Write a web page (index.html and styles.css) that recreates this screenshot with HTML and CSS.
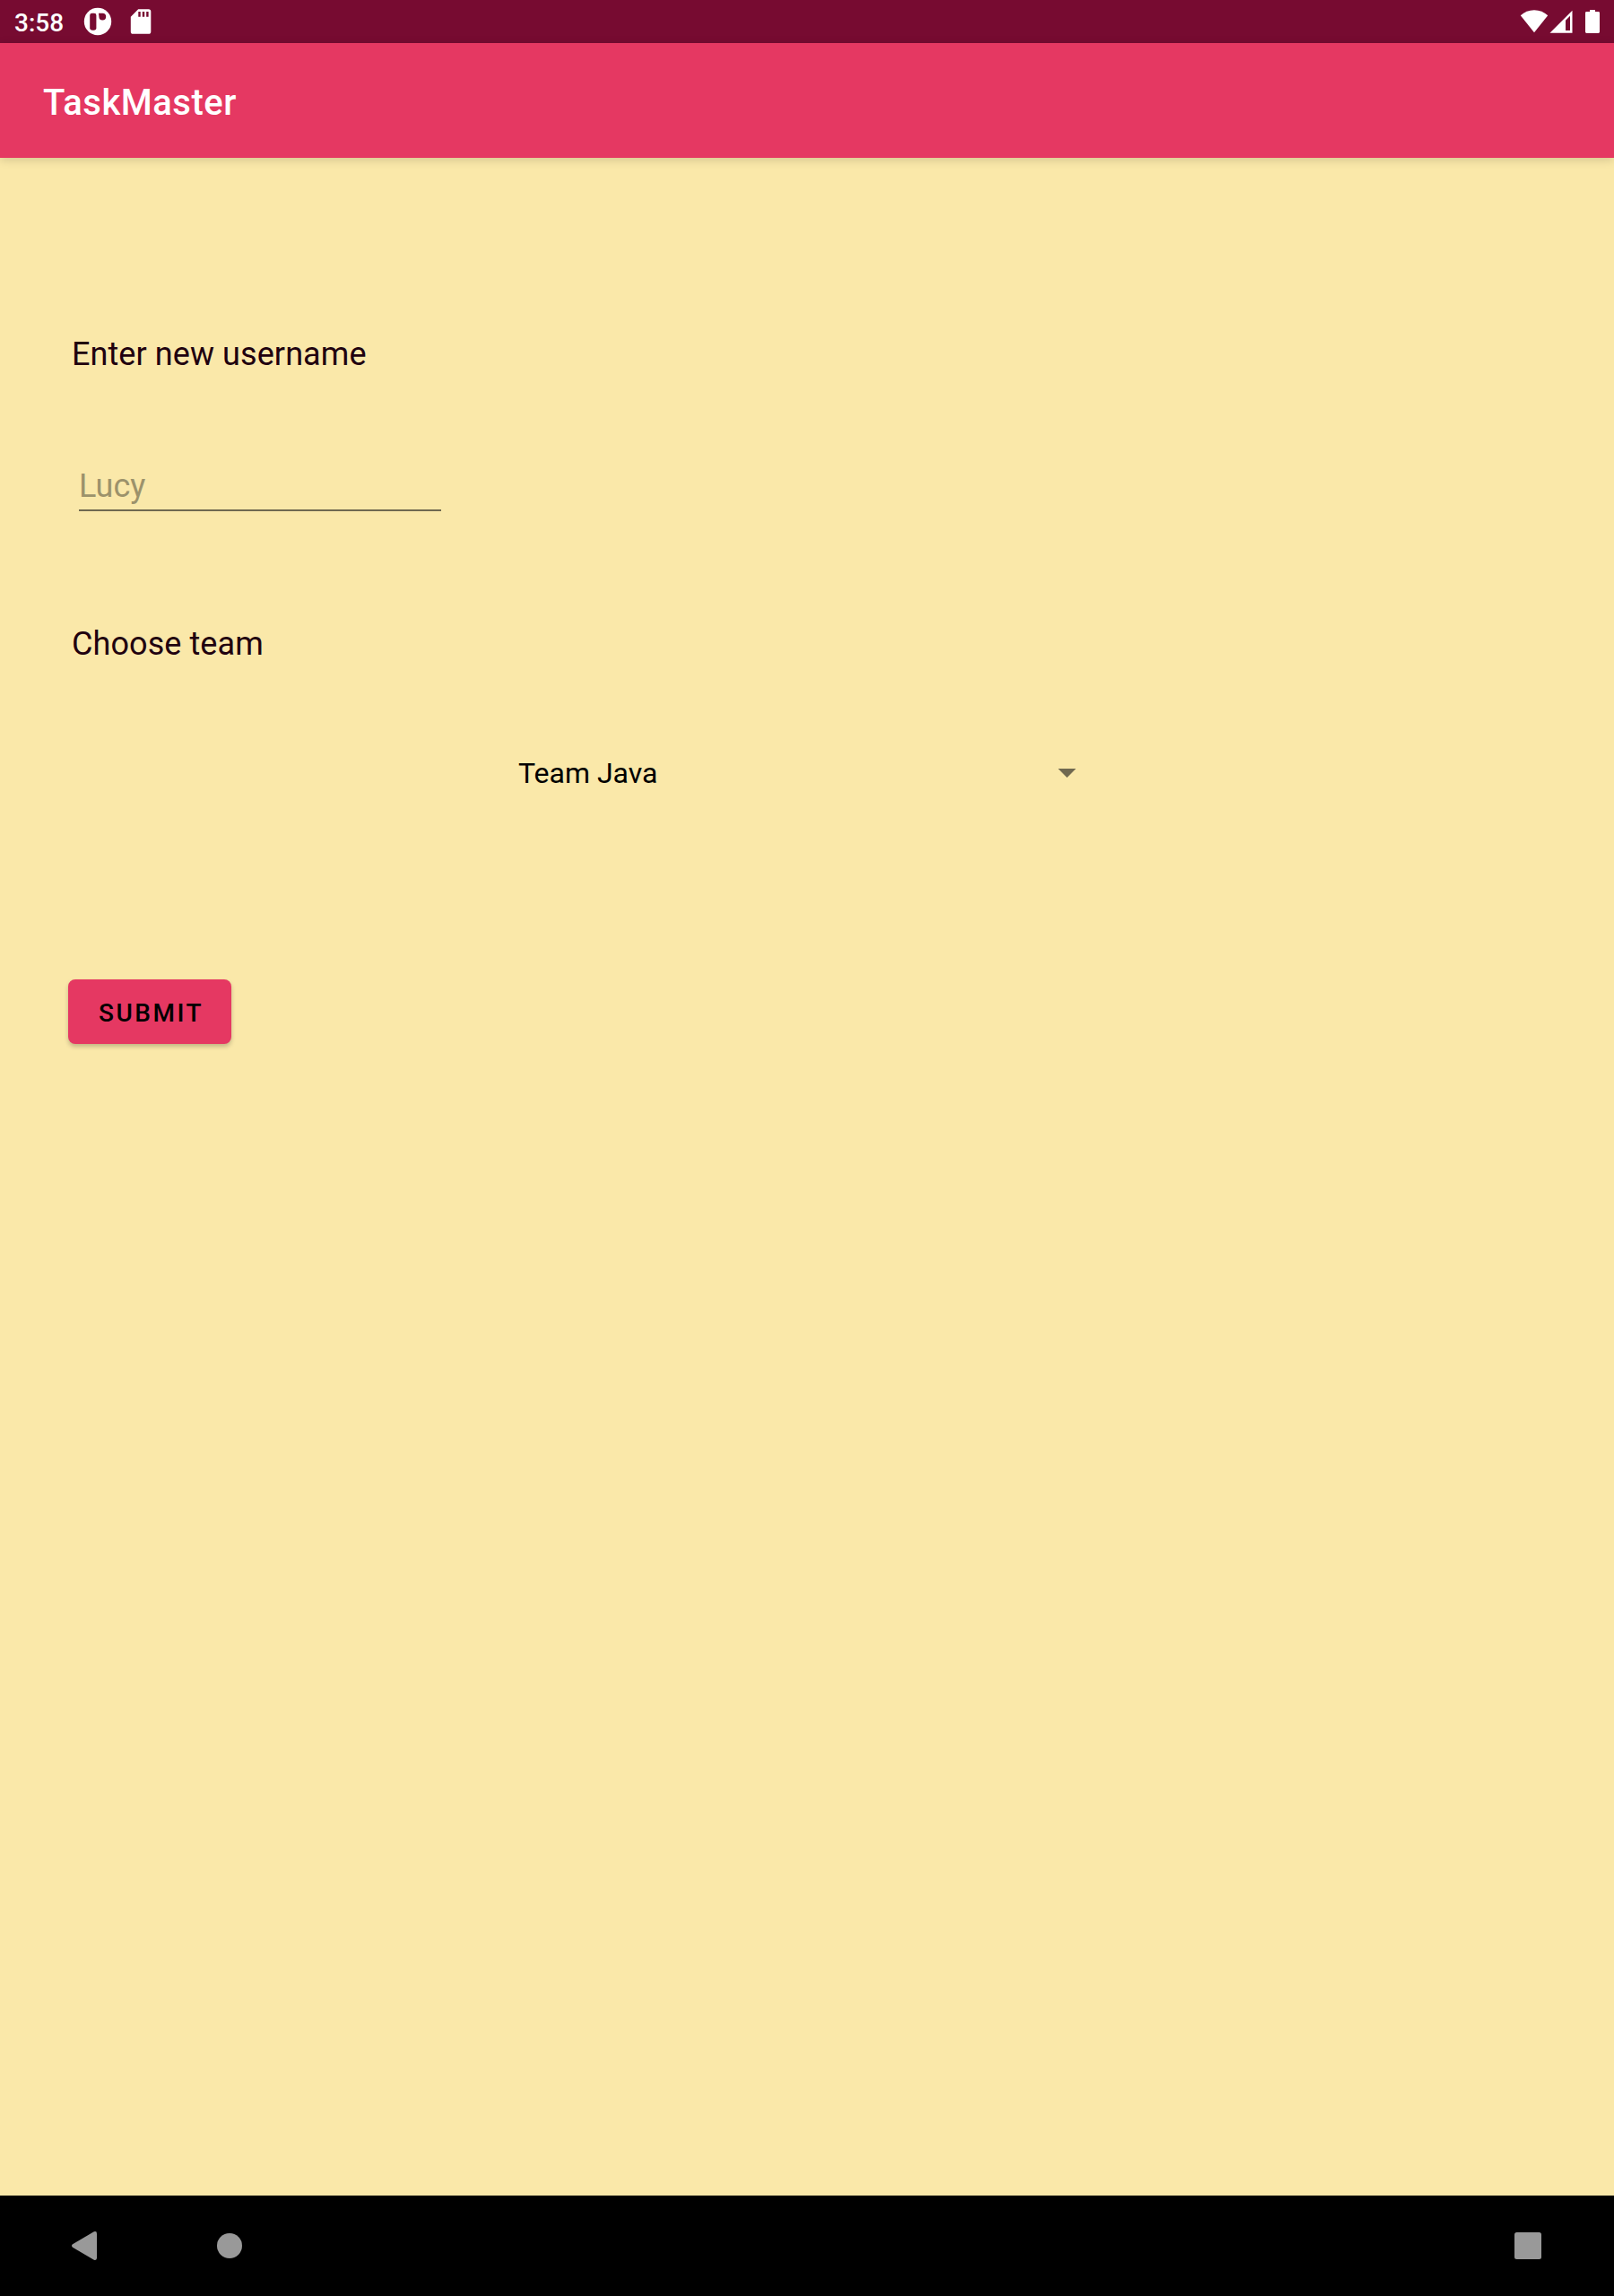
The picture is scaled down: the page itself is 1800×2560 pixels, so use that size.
FILE: index.html
```html
<!DOCTYPE html>
<html lang="en">
<head>
<meta charset="utf-8">
<title>TaskMaster</title>
<link rel="stylesheet" href="styles.css">
</head>
<body>
<div class="screen">
  <div class="status-bar">
    <span class="clock">3:58</span>
    <svg class="notice-icon" width="32" height="32" viewBox="0 0 32 32" aria-hidden="true">
      <circle cx="16" cy="16" r="15.2" fill="#fff"/>
      <rect x="7.2" y="6.7" width="7.2" height="19" rx="2.4" fill="#770b31"/>
      <path d="M17 6.7h4.3a3.9 3.9 0 1 1-3.9 3.9z" fill="#770b31"/>
    </svg>
    <svg class="sd-icon" width="24" height="30" viewBox="0 0 24 30" aria-hidden="true">
      <path d="M9.2 1.2H20.7a2.6 2.6 0 0 1 2.6 2.6v22.4a2.6 2.6 0 0 1-2.6 2.6H3.4a2.6 2.6 0 0 1-2.6-2.6V9.8z" fill="#fff"/>
      <path d="M9.3 4h2.4v5.7H9.3zM13.8 4h2.4v5.7h-2.4zM18.2 4h2.4v5.7h-2.4z" fill="#770b31"/>
    </svg>
    <div class="signals">
      <svg width="32" height="28" viewBox="0 0 32 28" aria-hidden="true">
        <path d="M.8 8.300C5 4.500 10 2.300 16 2.300S27 4.500 31.200 8.300L16 27.300z" fill="#fff"/>
      </svg>
      <svg class="cell-icon" width="26" height="26" viewBox="0 0 26 26" aria-hidden="true">
        <path fill-rule="evenodd" d="M.5 25.700L25.500.7v25zM18 23h5V6.700l-5 5z" fill="#fff"/>
      </svg>
      <svg class="battery-icon" width="16" height="26" viewBox="0 0 16 26" aria-hidden="true">
        <path d="M5 0h6v2h3.600a1.400 1.400 0 0 1 1.400 1.400v21.200a1.400 1.400 0 0 1-1.400 1.400H1.400a1.400 1.400 0 0 1-1.400-1.400V3.400A1.400 1.400 0 0 1 1.400 2H5z" fill="#fff"/>
      </svg>
    </div>
  </div>
  <header class="app-bar"><h1 class="app-title">TaskMaster</h1></header>
  <main class="content">
    <label class="label" for="username">Enter new username</label>
    <input class="username" id="username" type="text" placeholder="Lucy">
    <div class="label team-label">Choose team</div>
    <div class="spinner">
      <span>Team Java</span>
      <svg width="20" height="10" viewBox="0 0 20 10" aria-hidden="true"><path d="M0 0h20L10 10z" fill="#706950"/></svg>
    </div>
    <button class="submit" type="button">SUBMIT</button>
  </main>
  <nav class="nav-bar">
    <svg width="28" height="32" viewBox="0 0 28 32" aria-hidden="true"><path d="M1 14.300L24.800.3Q28-.8 28 2.500v27q0 3.300-3.200 2.200L1 17.700Q-1 16 1 14.300z" fill="#999"/></svg>
    <svg class="home-icon" width="28" height="28" viewBox="0 0 28 28" aria-hidden="true"><circle cx="14" cy="14" r="14" fill="#999"/></svg>
    <svg class="recent-icon" width="30" height="30" viewBox="0 0 30 30" aria-hidden="true"><rect width="30" height="30" rx="2.500" fill="#999"/></svg>
  </nav>
</div>
</body>
</html>
```
FILE: styles.css
```css
* { box-sizing: border-box; }

body {
  margin: 0;
  font-family: Roboto, sans-serif;
}

svg { display: block; flex: none; }

.screen {
  display: flex;
  flex-direction: column;
  width: 1800px;
  height: 2560px;
  background: #fae8a9;
}

.status-bar {
  display: flex;
  align-items: center;
  height: 48px;
  padding: 0 16px;
  background: #770b31;
  color: #fff;
}

.clock {
  width: 77px;
  font-size: 28px;
  font-weight: 500;
  line-height: 48px;
  padding-top: 3px;
}

.sd-icon { margin-left: 20px; }

.signals {
  display: flex;
  align-items: flex-end;
  height: 26px;
  margin-left: auto;
}

.cell-icon { margin-left: 1px; }
.battery-icon { margin-left: 14px; }

.app-bar {
  display: flex;
  align-items: center;
  height: 128px;
  padding: 0 48px;
  background: #e53862;
  box-shadow: 0 2px 10px rgba(0, 0, 0, .16);
}

.app-title {
  margin: 0;
  padding-top: 6px;
  color: #fff;
  font-size: 40px;
  font-weight: 500;
  line-height: 48px;
  letter-spacing: .5px;
}

.content {
  display: flex;
  flex: 1;
  flex-direction: column;
  align-items: flex-start;
  padding: 195px 76px 0;
}

.label {
  margin-left: 4px;
  color: #20000f;
  font-size: 36px;
  line-height: 48px;
  letter-spacing: .08px;
}

.username {
  width: 404px;
  height: 52px;
  margin: 99px 0 0 12px;
  padding: 0 0 2px;
  border: 0;
  border-bottom: 2px solid #706950;
  background: none;
  font: 36px/48px Roboto, sans-serif;
}

.username::placeholder { color: #9c926b; opacity: 1; }

.team-label { margin-top: 124px; }

.spinner {
  display: flex;
  align-items: center;
  justify-content: space-between;
  width: 622px;
  margin: 96px 0 0 502px;
  color: #000;
  font-size: 32px;
  line-height: 48px;
}

.submit {
  width: 182px;
  height: 72px;
  margin-top: 206px;
  padding: 4px 0 0 34px;
  border: 0;
  border-radius: 8px;
  background: #e53862;
  box-shadow: 0 3px 5px rgba(0, 0, 0, .22);
  color: #000;
  font: 500 28px/48px Roboto, sans-serif;
  letter-spacing: 2.5px;
  text-align: left;
}

.nav-bar {
  display: flex;
  align-items: center;
  height: 112px;
  padding: 0 81px 0 80px;
  background: #000;
}

.home-icon { margin-left: 134px; }
.recent-icon { margin-left: auto; }
```
